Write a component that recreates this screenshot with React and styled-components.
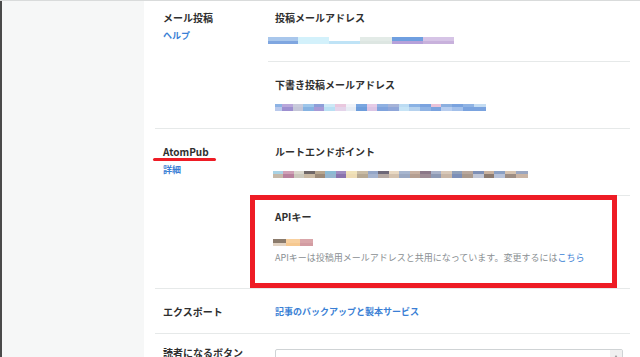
import React from 'react';
import styled, { createGlobalStyle } from 'styled-components';

const GlobalStyle = createGlobalStyle`
  html, body {
    margin: 0;
    padding: 0;
    background: #ffffff;
    overflow: hidden;
  }
  body {
    font-family: "Noto Sans CJK JP", "Noto Sans", "Liberation Sans", sans-serif;
    color: #333;
  }
`;

// blurred-out values from the screenshot, drawn as colour stripes
const MAIL_ADDRESS = [
  { w: 30, top: '#a9c7ec', bottom: '#7fa6e0' },
  { w: 31, top: '#d3f1fb', bottom: '#d3f1fb' },
  { w: 31, top: '#ffffff', bottom: '#bfe3f6' },
  { w: 32, top: '#e3ebe7', bottom: '#dde6e2' },
  { w: 31, top: '#6f9fe0', bottom: '#b6a1da' },
  { w: 31, top: '#d6c4e6', bottom: '#c8b1dc' },
];

const DRAFT_ADDRESS = [
  { w: 7, top: '#8db3e4', bottom: '#b9c9ec' },
  { w: 11, top: '#b9a7da', bottom: '#9d8fd0' },
  { w: 10, top: '#c9cbdc', bottom: '#c4c6d8' },
  { w: 11, top: '#9ec6ea', bottom: '#86b3e2' },
  { w: 10, top: '#8d9ed8', bottom: '#a79ad6' },
  { w: 11, top: '#cde9f6', bottom: '#b9e0f4' },
  { w: 11, top: '#e9c8de', bottom: '#e4d4ea' },
  { w: 10, top: '#eef2f8', bottom: '#e6ecf4' },
  { w: 11, top: '#79a6e0', bottom: '#6d9ddb' },
  { w: 10, top: '#e6cbe6', bottom: '#dcc4e4' },
  { w: 11, top: '#8fb1e2', bottom: '#7fa3dd' },
  { w: 11, top: '#a5b3d8', bottom: '#8fa6d9' },
  { w: 10, top: '#bcdcf3', bottom: '#c6e4f6' },
  { w: 11, top: '#8ab2e4', bottom: '#b6d2ee' },
  { w: 11, top: '#7aa3df', bottom: '#8fb3e4' },
  { w: 10, top: '#e9c3d9', bottom: '#7aa3df' },
  { w: 11, top: '#8cb0e0', bottom: '#b7cdef' },
  { w: 11, top: '#7aa3df', bottom: '#a3c0ea' },
  { w: 11, top: '#8fb3e4', bottom: '#7aa3df' },
  { w: 12, top: '#c4dcf2', bottom: '#7aa3df' },
];

const ROOT_ENDPOINT = [
  { w: 10, top: '#a9d2e4', bottom: '#c5b8a8' },
  { w: 11, top: '#cfa1b6', bottom: '#b8819d' },
  { w: 10, top: '#dad7cc', bottom: '#cbc8bc' },
  { w: 11, top: '#6f6767', bottom: '#c9b9a3' },
  { w: 10, top: '#b7a68f', bottom: '#9c8a78' },
  { w: 11, top: '#8bbbd4', bottom: '#96b6cf' },
  { w: 10, top: '#a08cc0', bottom: '#8a73ad' },
  { w: 11, top: '#f1e3ba', bottom: '#eedcb4' },
  { w: 11, top: '#c9bca5', bottom: '#b7a993' },
  { w: 10, top: '#94a6c8', bottom: '#a6b4cf' },
  { w: 11, top: '#6c6777', bottom: '#b3a7a2' },
  { w: 10, top: '#e8d8c2', bottom: '#d4c2ae' },
  { w: 11, top: '#a7b6cf', bottom: '#9aa8c2' },
  { w: 10, top: '#c7b0a1', bottom: '#b59f91' },
  { w: 11, top: '#8b7788', bottom: '#9d8b95' },
  { w: 10, top: '#a9b2c9', bottom: '#8d99b4' },
  { w: 11, top: '#d8c8b8', bottom: '#c8b6a6' },
  { w: 10, top: '#8fa0ba', bottom: '#7c8fb8' },
  { w: 11, top: '#b9a89d', bottom: '#a9998d' },
  { w: 11, top: '#7e90b6', bottom: '#c0c6d6' },
  { w: 10, top: '#c9b29f', bottom: '#8c7b70' },
  { w: 11, top: '#8aa0c4', bottom: '#b6c1d8' },
  { w: 11, top: '#d6c3b0', bottom: '#9d8d83' },
  { w: 12, top: '#9aa6c0', bottom: '#c9b4a4' },
];

const API_KEY = [
  { w: 13, top: '#8b7b6c', bottom: '#e2d3c3' },
  { w: 14, top: '#f8d09e', bottom: '#f6c88f' },
  { w: 13, top: '#d9a6aa', bottom: '#d39ca2' },
];

const Page = styled.div`
  display: flex;
  flex-direction: column;
  width: 640px;
  height: 357px;
  background: #ffffff;
`;

const TopRule = styled.div`
  height: 1px;
  background: #d9dbdb;
  flex-shrink: 0;
`;

const Body = styled.div`
  display: flex;
  flex: 1;
  overflow: hidden;
`;

const Sidebar = styled.aside`
  width: 142px;
  flex-shrink: 0;
  background: #f6f7f7;
  border-left: 2px solid #4a4a4a;
`;

const Main = styled.main`
  flex: 1;
  padding: 0 10px 0 11px;
  margin-top: -6px;
`;

const Section = styled.section`
  display: flex;
  border-bottom: ${(p) => (p.$last ? 'none' : '1px solid #e6e9e9')};
`;

const LabelCol = styled.div`
  width: 105px;
  flex-shrink: 0;
  padding: ${(p) => p.$pad || '16px'} 0 0 8px;
  display: flex;
  flex-direction: column;
  gap: 4px;
`;

const Label = styled.div`
  position: relative;
  align-self: flex-start;
  font-size: 10px;
  line-height: 14px;
  font-weight: 700;
  color: #2f2f2f;
  white-space: nowrap;
`;

const Underline = styled.span`
  position: absolute;
  left: -10px;
  bottom: -2px;
  width: 63px;
  height: 3px;
  border-radius: 2px;
  background: #ee1c25;
`;

const HelpLink = styled.a`
  font-size: 9px;
  line-height: 14px;
  font-weight: 700;
  color: #3a7fd5;
  text-decoration: none;
`;

const ValueCol = styled.div`
  flex: 1;
  display: flex;
  flex-direction: column;
`;

const Item = styled.div`
  position: relative;
  padding: ${(p) => p.$pad || '16px 7px 17px'};
  border-bottom: ${(p) => (p.$divided ? '1px solid #e6e9e9' : 'none')};
  font-size: 9px;
  line-height: 14px;
`;

const ItemTitle = styled.div`
  font-size: 10px;
  line-height: 14px;
  font-weight: 700;
  color: #2f2f2f;
`;

const Stripes = styled.div`
  display: flex;
  height: 7px;
  margin-top: ${(p) => p.$gap || '12px'};
`;

const Stripe = styled.span`
  display: block;
  height: 100%;
  flex-shrink: 0;
`;

const Note = styled.p`
  margin: 5px 0 0;
  font-size: 9px;
  line-height: 14px;
  color: #8a8f93;
`;

const InlineLink = styled.a`
  color: #3a7fd5;
  text-decoration: none;
  font-weight: ${(p) => (p.$bold ? 700 : 400)};
`;

const Highlight = styled.div`
  position: absolute;
  left: -18px;
  right: 13px;
  top: -1px;
  bottom: 0;
  border: 5px solid #ee1c25;
  pointer-events: none;
`;

const TextArea = styled.div`
  position: relative;
  height: 40px;
  margin: 15px 7px 0;
  border: 1px solid #cfd3d5;
  border-radius: 2px;
`;

const ScrollUp = styled.span`
  position: absolute;
  right: 0;
  top: 0;
  width: 12px;
  height: 12px;
  background: #f0f0f0;
  display: flex;
  align-items: center;
  justify-content: center;

  &::after {
    content: '';
    border-left: 2px solid transparent;
    border-right: 2px solid transparent;
    border-bottom: 3px solid #a0a0a0;
  }
`;

function Redacted({ parts, offset, gap }) {
  return (
    <Stripes $gap={gap} style={{ marginLeft: offset }}>
      {parts.map((p, i) => (
        <Stripe
          key={i}
          style={{
            width: p.w,
            background: `linear-gradient(${p.top} 0 50%, ${p.bottom} 50% 100%)`,
          }}
        />
      ))}
    </Stripes>
  );
}

export default function App() {
  return (
    <>
      <GlobalStyle />
      <Page>
        <TopRule />
        <Body>
          <Sidebar />
          <Main>
            <Section>
              <LabelCol>
                <Label>メール投稿</Label>
                <HelpLink href="#">ヘルプ</HelpLink>
              </LabelCol>
              <ValueCol>
                <Item $divided>
                  <ItemTitle>投稿メールアドレス</ItemTitle>
                  <Redacted parts={MAIL_ADDRESS} offset={-7} />
                </Item>
                <Item>
                  <ItemTitle>下書き投稿メールアドレス</ItemTitle>
                  <Redacted parts={DRAFT_ADDRESS} offset={0} />
                </Item>
              </ValueCol>
            </Section>

            <Section>
              <LabelCol>
                <Label>
                  AtomPub
                  <Underline />
                </Label>
                <HelpLink href="#">詳細</HelpLink>
              </LabelCol>
              <ValueCol>
                <Item $divided>
                  <ItemTitle>ルートエンドポイント</ItemTitle>
                  <Redacted parts={ROOT_ENDPOINT} offset={-2} />
                </Item>
                <Item $pad="14px 7px 23px">
                  <Highlight />
                  <ItemTitle>APIキー</ItemTitle>
                  <Redacted parts={API_KEY} offset={-2} gap="15px" />
                  <Note>
                    APIキーは投稿用メールアドレスと共用になっています。変更するには
                    <InlineLink href="#">こちら</InlineLink>
                  </Note>
                </Item>
              </ValueCol>
            </Section>

            <Section>
              <LabelCol>
                <Label>エクスポート</Label>
              </LabelCol>
              <ValueCol>
                <Item $pad="16px 7px 14px">
                  <InlineLink href="#" $bold>
                    記事のバックアップと製本サービス
                  </InlineLink>
                </Item>
              </ValueCol>
            </Section>

            <Section $last>
              <LabelCol $pad="12px">
                <Label>読者になるボタン</Label>
              </LabelCol>
              <ValueCol>
                <TextArea>
                  <ScrollUp />
                </TextArea>
              </ValueCol>
            </Section>
          </Main>
        </Body>
      </Page>
    </>
  );
}
